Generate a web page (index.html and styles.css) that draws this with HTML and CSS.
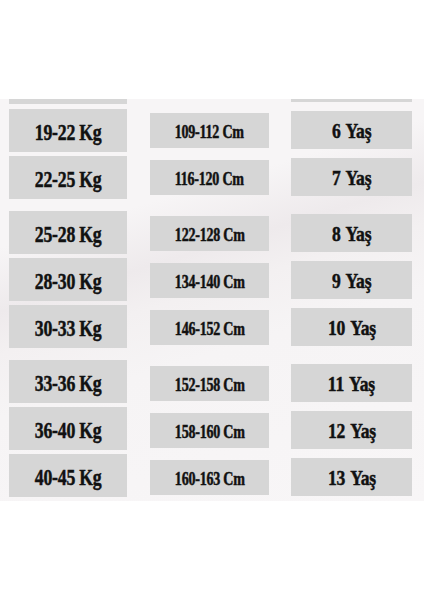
FILE: index.html
```html
<!DOCTYPE html>
<html lang="tr">
<head>
<meta charset="utf-8">
<title>Beden Tablosu</title>
<link rel="stylesheet" href="styles.css">
</head>
<body>
<main class="chart">
  <div class="col col-kg">
    <div class="box stub"></div>
    <div class="box"><span class="label">19-22 Kg</span></div>
    <div class="box wide"><span class="label">22-25 Kg</span></div>
    <div class="box"><span class="label">25-28 Kg</span></div>
    <div class="box"><span class="label">28-30 Kg</span></div>
    <div class="box wide"><span class="label">30-33 Kg</span></div>
    <div class="box"><span class="label">33-36 Kg</span></div>
    <div class="box"><span class="label">36-40 Kg</span></div>
    <div class="box"><span class="label">40-45 Kg</span></div>
  </div>
  <div class="col col-cm">
    <div class="box"><span class="label">109-112 Cm</span></div>
    <div class="box wide"><span class="label">116-120 Cm</span></div>
    <div class="box"><span class="label">122-128 Cm</span></div>
    <div class="box"><span class="label">134-140 Cm</span></div>
    <div class="box wide"><span class="label">146-152 Cm</span></div>
    <div class="box"><span class="label">152-158 Cm</span></div>
    <div class="box"><span class="label">158-160 Cm</span></div>
    <div class="box"><span class="label">160-163 Cm</span></div>
  </div>
  <div class="col col-age">
    <div class="box stub"></div>
    <div class="box"><span class="label">6 Yaş</span></div>
    <div class="box wide"><span class="label">7 Yaş</span></div>
    <div class="box"><span class="label">8 Yaş</span></div>
    <div class="box"><span class="label">9 Yaş</span></div>
    <div class="box wide"><span class="label">10 Yaş</span></div>
    <div class="box"><span class="label">11 Yaş</span></div>
    <div class="box"><span class="label">12 Yaş</span></div>
    <div class="box"><span class="label">13 Yaş</span></div>
  </div>
</main>
</body>
</html>
```
FILE: styles.css
```css
html, body {
  margin: 0;
  padding: 0;
  background: #ffffff;
}

body {
  width: 424px;
  height: 600px;
  padding-top: 99px;
  box-sizing: border-box;
}

.chart {
  height: 402px;
  overflow: hidden;
  display: flex;
  align-items: flex-start;
  background:
    linear-gradient(163deg, #f7f5f6 0%, #f7f5f6 28%, #eeeaec 40%, #f3f0f1 48%, #f6f4f5 60%, #f8f6f7 100%);
  font-family: "Liberation Serif", "DejaVu Serif", serif;
  font-weight: bold;
  color: #111111;
}

.col {
  display: flex;
  flex-direction: column;
}

.box {
  background: #d6d6d6;
  display: flex;
  align-items: center;
  justify-content: center;
  white-space: nowrap;
}

.label {
  display: inline-block;
  line-height: 1;
  letter-spacing: -0.3px;
  -webkit-text-stroke: 0.5px #111111;
  padding-top: 2px;
}

.col-kg {
  margin-left: 9px;
  width: 118px;
  font-size: 24px;
}
.col-kg .label { transform: scaleX(0.74); }
.col-kg .box { height: 43px; margin-bottom: 4px; }
.col-kg .box.wide { margin-bottom: 12px; }
.col-kg .box.stub { height: 5px; margin-bottom: 5px; }

.col-cm {
  margin-left: 23px;
  margin-top: 14px;
  width: 119px;
  font-size: 18px;
}
.col-cm .label { transform: scaleX(0.78); }
.col-cm .box { height: 35px; margin-bottom: 12px; }
.col-cm .box.wide { margin-bottom: 21px; }

.col-age {
  margin-left: 22px;
  width: 121px;
  font-size: 22px;
}
.col-age .label { transform: scaleX(0.8); word-spacing: 2px; }
.col-age .box { height: 38px; margin-bottom: 9px; }
.col-age .box.wide { margin-bottom: 18px; }
.col-age .box.stub { height: 3px; margin-bottom: 9px; }
```
